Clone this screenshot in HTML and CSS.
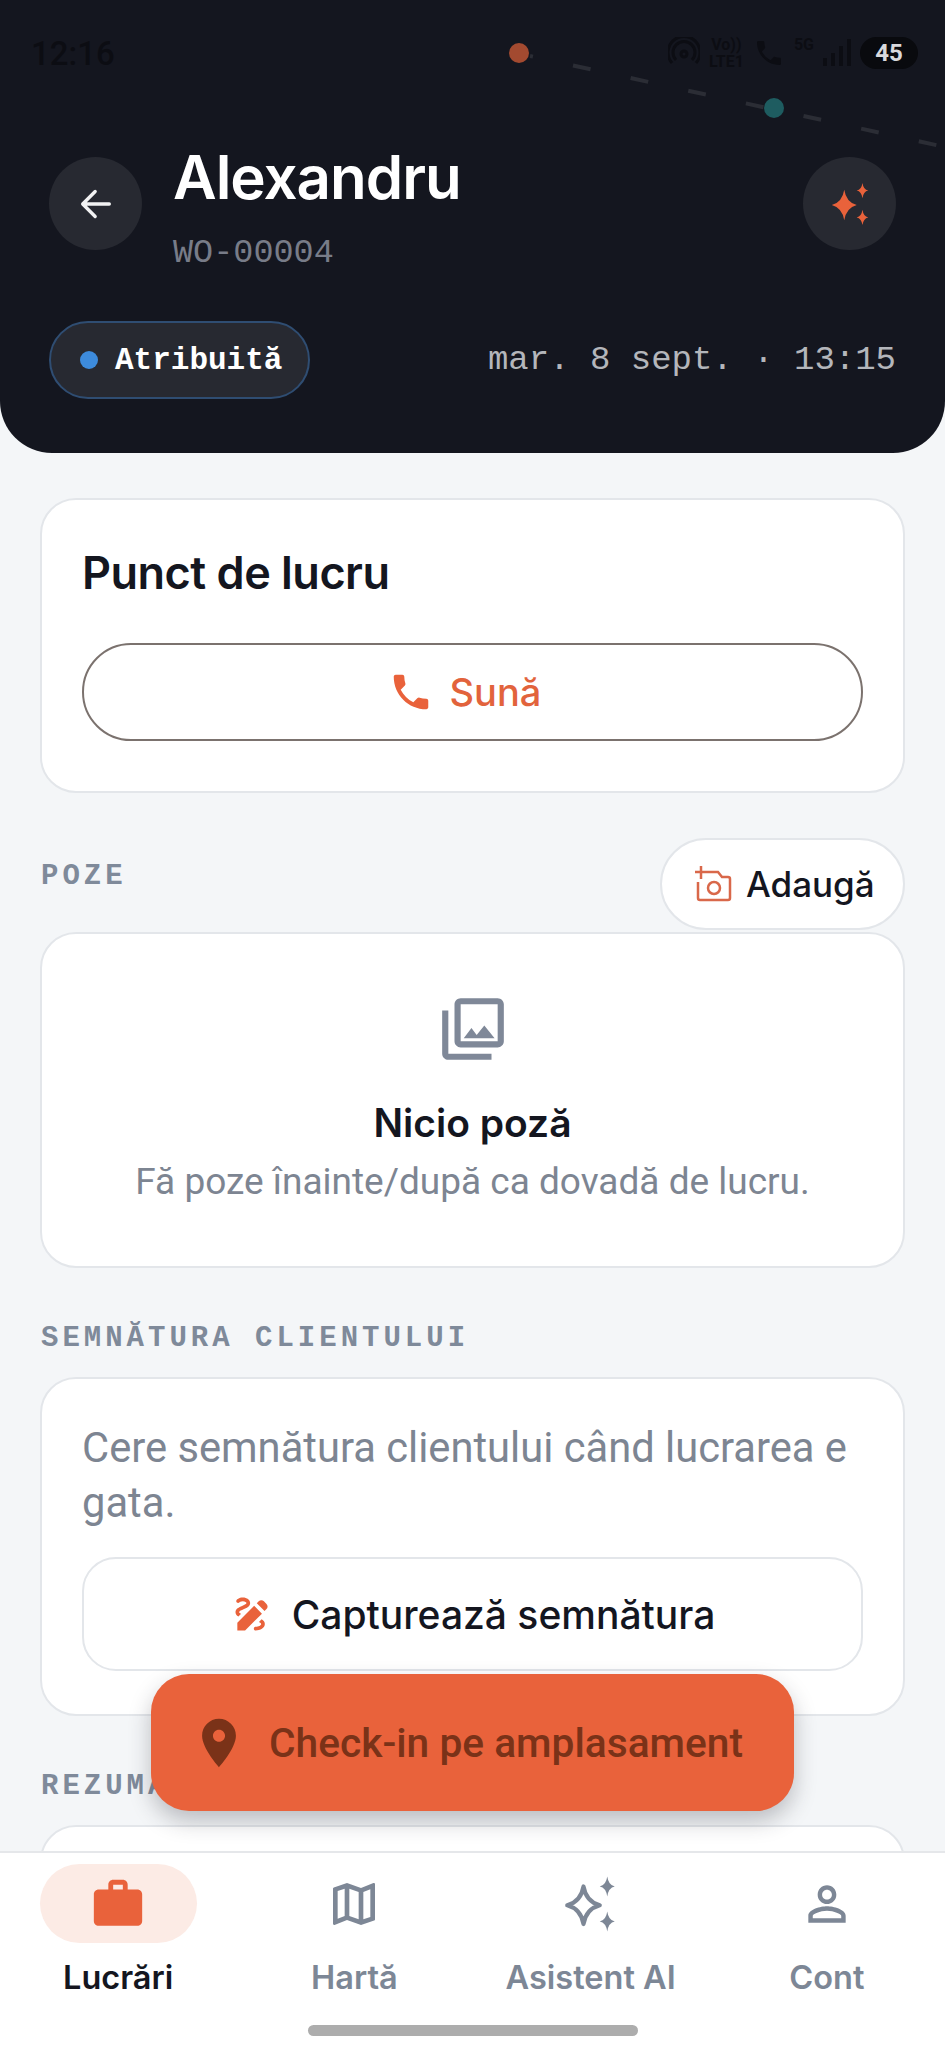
FILE: index.html
```html
<!DOCTYPE html>
<html lang="ro">
<head>
<meta charset="UTF-8">
<meta name="viewport" content="width=device-width, initial-scale=1.0">
<title>Alexandru - WO-00004</title>
<link rel="stylesheet" href="styles.css">
</head>

<body>

<header class="hero">
    <svg class="route" width="945" height="160" viewBox="0 0 945 160" aria-hidden="true">
        <path class="route-line" d="M530 56 L945 147"/>
        <circle class="route-start" cx="519" cy="53" r="10"/>
        <circle class="route-end" cx="774" cy="108" r="10"/>
    </svg>

    <div class="status-bar">
        <span class="status-time">12:16</span>
        <div class="status-icons">
            <svg width="32" height="32" viewBox="0 0 32 32" class="status-icon"><circle cx="16" cy="17" r="3"/><path d="M8 23a11 11 0 1 1 16 0M4 26a16 16 0 1 1 24 0"/></svg>
            <span class="status-net">Vo))<br>LTE1</span>
            <svg width="32" height="34" viewBox="0 0 24 24" class="status-fill"><path d="M6.62 10.79c1.44 2.83 3.76 5.14 6.59 6.59l2.2-2.2c.27-.27.67-.36 1.02-.24 1.12.37 2.33.57 3.57.57.55 0 1 .45 1 1V20c0 .55-.45 1-1 1-9.39 0-17-7.61-17-17 0-.55.45-1 1-1h3.5c.55 0 1 .45 1 1 0 1.25.2 2.45.57 3.57.11.35.03.74-.25 1.02l-2.2 2.2z"/></svg>
            <span class="status-net">5G<br>&nbsp;</span>
            <svg width="28" height="30" viewBox="0 0 28 30" class="status-fill"><rect x="0" y="20" width="4" height="8"/><rect x="8" y="15" width="4" height="13"/><rect x="16" y="8" width="4" height="20"/><rect x="24" y="1" width="4" height="27"/></svg>
            <span class="battery">45</span>
        </div>
    </div>

    <div class="hero-top">
        <button class="round-btn">
            <svg width="40" height="40" viewBox="0 0 24 24" class="back-icon"><path d="M20 12H4M11.5 4.5 4 12l7.5 7.5"/></svg>
        </button>
        <div class="hero-title">
            <h1>Alexandru</h1>
            <div class="wo-number">WO-00004</div>
        </div>
        <button class="round-btn">
            <svg width="46" height="46" viewBox="0 0 24 24" class="spark-icon"><path d="M9 4.5Q10 11 15.5 12.5 10 14 9 20.500 8 14 2.500 12.500 8 11 9 4.500z"/><path d="M18.500 1Q19 4.500 21.500 5 19 5.500 18.500 9 18 5.500 15.500 5 18 4.500 18.500 1z"/><path d="M18.500 15Q19 18.500 21.500 19 19 19.500 18.500 23 18 19.500 15.500 19 18 18.500 18.500 15z"/></svg>
        </button>
    </div>

    <div class="hero-meta">
        <span class="status-pill"><span class="status-dot"></span>Atribuită</span>
        <span class="hero-date">mar. 8 sept. · 13:15</span>
    </div>
</header>

<main class="content">
    <section class="card site-card">
        <h2 class="card-title">Punct de lucru</h2>
        <button class="call-btn">
            <svg width="46" height="46" viewBox="0 0 24 24"><path d="M6.62 10.79c1.44 2.83 3.76 5.14 6.59 6.59l2.2-2.2c.27-.27.67-.36 1.02-.24 1.12.37 2.33.57 3.57.57.55 0 1 .45 1 1V20c0 .55-.45 1-1 1-9.39 0-17-7.61-17-17 0-.55.45-1 1-1h3.5c.55 0 1 .45 1 1 0 1.25.2 2.45.57 3.57.11.35.03.74-.25 1.02l-2.2 2.2z"/></svg>
            Sună
        </button>
    </section>

    <div class="section-row">
        <span class="section-label">POZE</span>
        <button class="add-btn">
            <svg width="38" height="38" viewBox="0 0 38 38" class="add-icon"><path d="M4 17v16a2 2 0 0 0 2 2h28a2 2 0 0 0 2-2V14a2 2 0 0 0-2-2h-6l-4-5H13"/><circle cx="20" cy="23" r="6"/><path d="M7 1v13M1 7h12"/></svg>
            Adaugă
        </button>
    </div>
    <section class="card empty-card">
        <svg width="74" height="74" viewBox="0 0 24 24" class="empty-icon"><path d="M20 4v12H8V4h12m0-2H8c-1.100 0-2 .9-2 2v12c0 1.100.9 2 2 2h12c1.100 0 2-.9 2-2V4c0-1.100-.9-2-2-2zm-8.500 9.670l1.690 2.260 2.480-3.100L19 15H9zM2 6v14c0 1.100.9 2 2 2h14v-2H4V6H2z"/></svg>
        <h3 class="empty-title">Nicio poză</h3>
        <p class="empty-text">Fă poze înainte/după ca dovadă de lucru.</p>
    </section>

    <div class="section-label section-gap">SEMNĂTURA CLIENTULUI</div>
    <section class="card sign-card">
        <p class="sign-text">Cere semnătura clientului când lucrarea e gata.</p>
        <button class="sign-btn">
            <svg width="44" height="44" viewBox="0 0 24 24"><path d="M18.850 10.390l1.060-1.060c.78-.78.78-2.050 0-2.830L18.500 5.090c-.78-.78-2.050-.78-2.830 0l-1.060 1.060 4.240 4.240zm-5.660-2.830L4 16.760V21h4.240l9.190-9.190-4.240-4.250zM19 17.500c0 2.190-2.540 3.500-5 3.500-.55 0-1-.45-1-1s.45-1 1-1c1.540 0 3-.73 3-1.500 0-.47-.48-.87-1.230-1.200l1.480-1.480c1.070.63 1.750 1.470 1.750 2.680zM4.580 13.350C3.610 12.790 3 12.060 3 11c0-1.800 1.890-2.630 3.560-3.360C7.590 7.180 9 6.560 9 6c0-.41-.78-1-2-1-1.260 0-1.800.61-1.830.64-.35.41-.98.46-1.400.12-.41-.34-.49-.95-.15-1.380C3.730 4.240 4.760 3 7 3s4 1.320 4 3c0 1.870-1.930 2.720-3.640 3.470C6.420 9.880 5 10.500 5 11c0 .31.43.6 1.070.86l-1.490 1.490z"/></svg>
            Capturează semnătura
        </button>
    </section>

    <div class="section-label section-gap">REZUMAT</div>
    <section class="card summary-card"></section>
</main>

<button class="checkin-btn">
    <svg width="58" height="58" viewBox="0 0 24 24"><path d="M12 2C8.130 2 5 5.130 5 9c0 5.250 7 13 7 13s7-7.750 7-13c0-3.870-3.130-7-7-7zm0 9.500c-1.380 0-2.500-1.120-2.500-2.500s1.120-2.500 2.500-2.500 2.500 1.120 2.500 2.500-1.120 2.500-2.500 2.500z"/></svg>
    Check-in pe amplasament
</button>

<nav class="tabs">
    <a class="tab active">
        <span class="tab-icon">
            <svg width="58" height="58" viewBox="0 0 24 24"><path d="M20 6h-4V4c0-1.110-.89-2-2-2h-4c-1.110 0-2 .89-2 2v2H4c-1.110 0-1.990.89-1.990 2L2 19c0 1.110.89 2 2 2h16c1.110 0 2-.89 2-2V8c0-1.110-.89-2-2-2zm-6 0h-4V4h4v2z"/></svg>
        </span>
        Lucrări
    </a>
    <a class="tab">
        <span class="tab-icon">
            <svg width="56" height="56" viewBox="0 0 24 24"><path d="M20.500 3l-.16.03L15 5.100 9 3 3.360 4.900c-.21.07-.36.25-.36.48V20.500c0 .28.22.5.5.5l.16-.03L9 18.900l6 2.100 5.640-1.900c.21-.07.36-.25.36-.48V3.500c0-.28-.22-.5-.5-.5zM10 5.470l4 1.400v11.660l-4-1.400V5.470zm-5 .99l3-1.010v11.700l-3 1.160V6.460zm14 11.080l-3 1.010V6.860l3-1.160v11.840z"/></svg>
        </span>
        Hartă
    </a>
    <a class="tab">
        <span class="tab-icon">
            <svg width="60" height="60" viewBox="0 0 24 24"><path class="spark-outline" d="M9 5Q10 11 15.500 12.500 10 14 9 20 8 14 2.500 12.500 8 11 9 5z"/><path d="M18.500 1Q19 4.500 21.500 5 19 5.500 18.500 9 18 5.500 15.500 5 18 4.500 18.500 1z"/><path d="M18.500 15Q19 18.500 21.500 19 19 19.500 18.500 23 18 19.500 15.500 19 18 18.500 18.500 15z"/></svg>
        </span>
        Asistent AI
    </a>
    <a class="tab">
        <span class="tab-icon">
            <svg width="56" height="56" viewBox="0 0 24 24"><path d="M12 5.900c1.160 0 2.100.94 2.100 2.100s-.94 2.100-2.100 2.100S9.900 9.160 9.900 8s.94-2.100 2.100-2.100m0 9c2.970 0 6.100 1.460 6.100 2.100v1.100H5.900V17c0-.64 3.130-2.100 6.100-2.100M12 4C9.790 4 8 5.790 8 8s1.790 4 4 4 4-1.790 4-4-1.790-4-4-4zm0 9c-2.670 0-8 1.340-8 4v3h16v-3c0-2.660-5.330-4-8-4z"/></svg>
        </span>
        Cont
    </a>
    <div class="home-bar"></div>
</nav>

</body>
</html>
```

FILE: styles.css
```css
* {
    box-sizing: border-box;
}

body {
    font-family: Roboto, Arial, sans-serif;
    background-color: #f4f6f8;
    display: flex;
    flex-direction: column;
    margin: 0;
    height: 2048px;
    overflow: hidden;
    position: relative;
}

button {
    font-family: inherit;
    cursor: pointer;
}

/* dark header */
.hero {
    flex: none;
    height: 453px;
    padding: 35px 49px 0;
    background-color: #14161f;
    border-radius: 0 0 52px 52px;
    position: relative;
    overflow: hidden;
}

.route {
    position: absolute;
    left: 0;
    top: 0;
}

.route-line {
    fill: none;
    stroke: #2b2d35;
    stroke-width: 4;
    stroke-dasharray: 18 41;
    stroke-dashoffset: 15;
}

.route-start {
    fill: #a34a30;
}

.route-end {
    fill: #1e5c60;
}

.status-bar {
    display: flex;
    justify-content: space-between;
    align-items: center;
    height: 36px;
    margin-left: -18px;
    margin-right: -22px;
    position: relative;
    color: #0c0d13;
}

.status-time {
    font-size: 33px;
    font-weight: 500;
    width: 86px;
}

.status-icons {
    display: flex;
    align-items: center;
    gap: 9px;
}

.status-icon {
    fill: none;
    stroke: #0c0d13;
    stroke-width: 3;
}

.status-fill {
    fill: #0c0d13;
}

.status-net {
    font-size: 16px;
    font-weight: 700;
    line-height: 17px;
    text-align: center;
}

.battery {
    background-color: #090a0e;
    color: #d9d9dc;
    font-size: 24px;
    font-weight: 700;
    line-height: 32px;
    border-radius: 16px;
    width: 58px;
    text-align: center;
}

.hero-top {
    display: flex;
    align-items: flex-start;
    margin-top: 86px;
    position: relative;
}

.round-btn {
    flex: none;
    width: 93px;
    height: 93px;
    padding: 0;
    border: 0;
    border-radius: 50%;
    background-color: #272931;
    display: flex;
    align-items: center;
    justify-content: center;
}

.back-icon {
    fill: none;
    stroke: #f2f2f3;
    stroke-width: 2;
    stroke-linecap: round;
    stroke-linejoin: round;
}

.spark-icon {
    fill: #e9623b;
}

.hero-title {
    flex: 1;
    margin-left: 31px;
    margin-top: -16px;
}

.hero-title h1 {
    margin: 0;
    font-family: Inter, sans-serif;
    font-size: 60px;
    font-weight: 600;
    line-height: 72px;
    color: #fff;
    letter-spacing: -1px;
}

.wo-number {
    font-family: "Liberation Mono", monospace;
    font-size: 33.500px;
    line-height: 40px;
    margin-top: 20px;
    color: #787c88;
}

.hero-meta {
    display: flex;
    justify-content: space-between;
    align-items: center;
    margin-top: 48px;
    position: relative;
}

.status-pill {
    display: flex;
    align-items: center;
    width: 261px;
    height: 78px;
    padding-left: 29px;
    gap: 17px;
    background-color: #272931;
    border: 2px solid #2f4d72;
    border-radius: 39px;
    color: #fff;
    font-family: "Liberation Mono", monospace;
    font-size: 31px;
    font-weight: 700;
}

.status-dot {
    width: 18px;
    height: 18px;
    border-radius: 50%;
    background-color: #3d8bdc;
}

.hero-date {
    font-family: "Liberation Mono", monospace;
    font-size: 34px;
    color: #b4b6bb;
}

/* scrolling content */
.content {
    flex: 1;
    min-height: 0;
    overflow: hidden;
    padding: 45px 40px 0;
}

.card {
    background-color: #fff;
    border: 2px solid #e3e6ea;
    border-radius: 36px;
}

.site-card {
    height: 295px;
    padding: 40px;
}

.card-title {
    margin: 0;
    font-family: Inter, sans-serif;
    font-size: 45px;
    font-weight: 600;
    line-height: 66px;
    color: #14161f;
    letter-spacing: -0.5px;
}

.call-btn {
    display: flex;
    align-items: center;
    justify-content: center;
    gap: 16px;
    width: 100%;
    height: 98px;
    margin-top: 37px;
    padding: 0 16px 0 0;
    background-color: #fff;
    border: 2px solid #7b726e;
    border-radius: 49px;
    color: #e2633c;
    font-family: Inter, sans-serif;
    font-size: 38px;
    font-weight: 500;
}

.call-btn svg {
    fill: #e9623b;
}

.section-row {
    display: flex;
    justify-content: space-between;
    align-items: center;
    margin-top: 45px;
    margin-bottom: 2px;
}

.section-label {
    font-family: "Liberation Mono", monospace;
    font-size: 29px;
    font-weight: 700;
    line-height: 36px;
    letter-spacing: 4px;
    color: #7f8a9a;
    margin-left: 1px;
}

.section-row .section-label {
    margin-bottom: 14px;
}

.section-gap {
    margin-top: 53px;
    margin-bottom: 20px;
}

.add-btn {
    display: flex;
    align-items: center;
    gap: 14px;
    width: 245px;
    height: 92px;
    padding: 0 0 0 32px;
    background-color: #fff;
    border: 2px solid #e3e6ea;
    border-radius: 46px;
    color: #14161f;
    font-family: Inter, sans-serif;
    font-size: 35px;
    font-weight: 500;
}

.add-icon {
    fill: none;
    stroke: #d9684a;
    stroke-width: 2.500;
}

.empty-card {
    height: 336px;
    padding-top: 58px;
    display: flex;
    flex-direction: column;
    align-items: center;
}

.empty-icon {
    fill: #7f8898;
}

.empty-title {
    margin: 35px 0 0;
    font-family: Inter, sans-serif;
    font-size: 39px;
    font-weight: 600;
    line-height: 44px;
    color: #14161f;
}

.empty-text {
    margin: 15px 0 0;
    font-size: 37px;
    line-height: 44px;
    color: #7d8592;
}

.sign-card {
    height: 339px;
    padding: 41px 40px 0;
}

.sign-text {
    margin: 0;
    font-size: 41.700px;
    line-height: 55px;
    color: #7d8592;
}

.sign-btn {
    display: flex;
    align-items: center;
    justify-content: center;
    gap: 18px;
    width: 100%;
    height: 114px;
    margin-top: 27px;
    background-color: #fff;
    border: 2px solid #e3e6ea;
    border-radius: 34px;
    color: #14161f;
    font-family: Inter, sans-serif;
    font-size: 39px;
    font-weight: 500;
}

.sign-btn svg {
    fill: #e9623b;
}

.summary-card {
    height: 200px;
}

/* floating action */
.checkin-btn {
    position: absolute;
    left: 151px;
    top: 1674px;
    width: 643px;
    height: 137px;
    padding: 0 0 0 39px;
    display: flex;
    align-items: center;
    gap: 21px;
    border: 0;
    border-radius: 38px;
    background-color: #e9623b;
    color: #7a3218;
    font-size: 40.700px;
    font-weight: 500;
    box-shadow: 0 10px 22px rgba(40, 40, 50, 0.28);
}

.checkin-btn svg {
    fill: #7a3218;
}

/* bottom navigation */
.tabs {
    flex: none;
    height: 197px;
    padding-top: 11px;
    background-color: #fff;
    border-top: 2px solid #e5e7ea;
    display: grid;
    grid-template-columns: repeat(4, 1fr);
    position: relative;
}

.tab {
    display: flex;
    flex-direction: column;
    align-items: center;
    font-family: Inter, sans-serif;
    font-size: 32.500px;
    font-weight: 600;
    line-height: 40px;
    color: #7d8796;
}

.tab-icon {
    width: 157px;
    height: 79px;
    border-radius: 40px;
    margin-bottom: 15px;
    display: flex;
    align-items: center;
    justify-content: center;
}

.tab-icon svg {
    fill: #7d8796;
}

.spark-outline {
    fill: none;
    stroke: #7d8796;
    stroke-width: 1.700;
    stroke-linejoin: round;
}

.tab.active {
    color: #14161f;
}

.tab.active .tab-icon {
    background-color: #fcebe5;
}

.tab.active svg {
    fill: #e9623b;
}

.home-bar {
    position: absolute;
    left: 308px;
    top: 172px;
    width: 330px;
    height: 11px;
    border-radius: 6px;
    background-color: #adadad;
}
```
